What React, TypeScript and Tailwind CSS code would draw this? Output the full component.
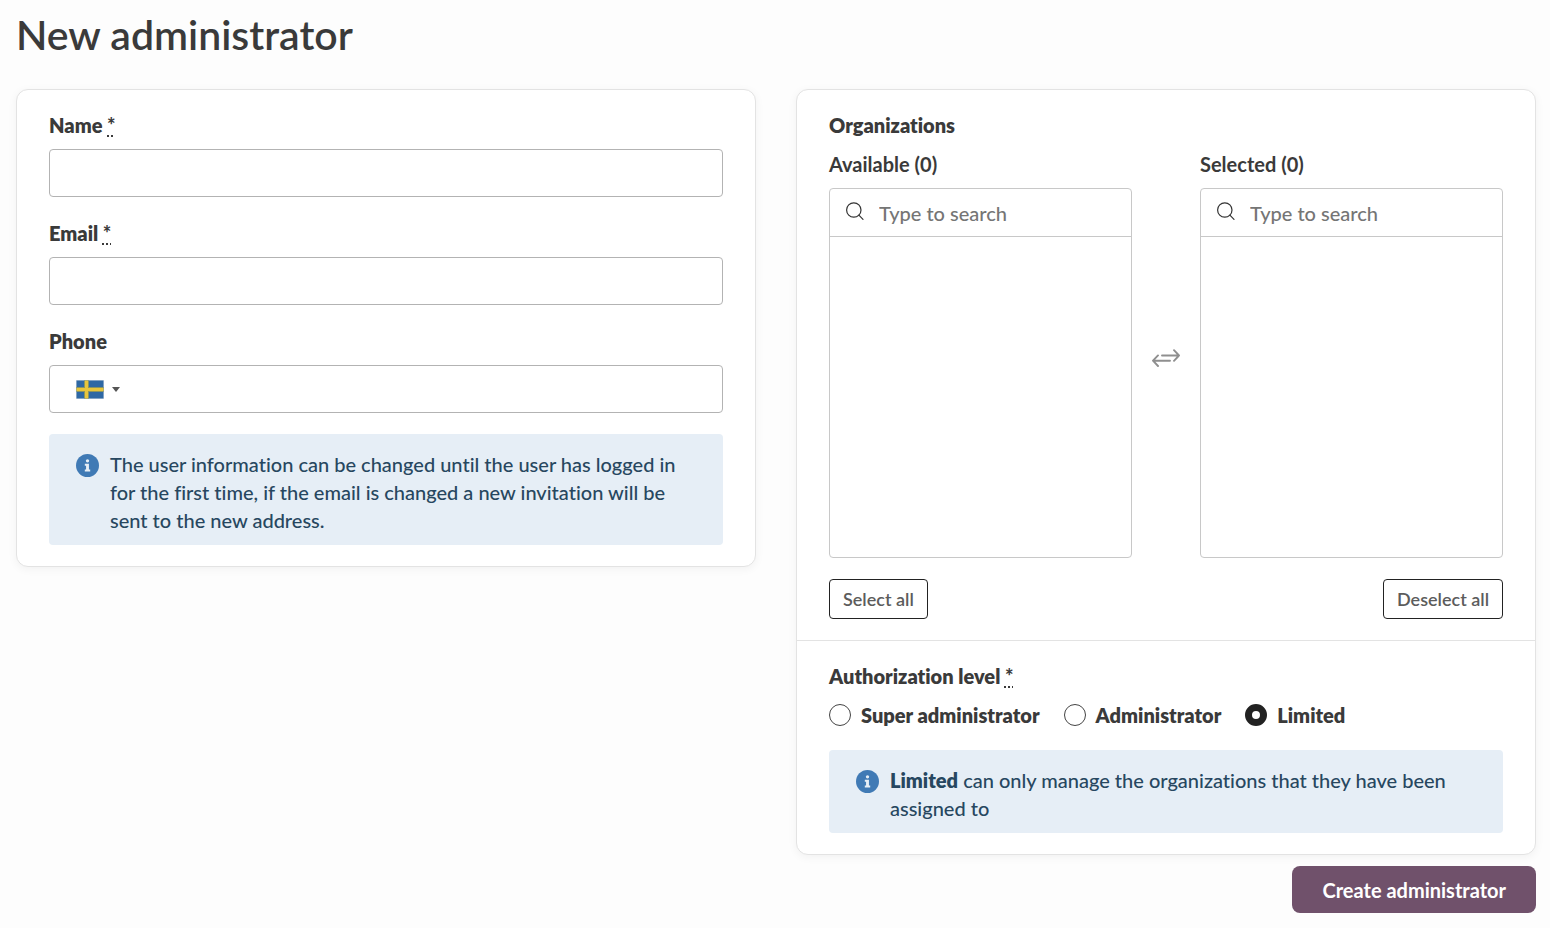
import { useState } from 'react';
import type { ReactNode } from 'react';

type Level = 'super' | 'admin' | 'limited';

const LEVELS: { value: Level; label: string }[] = [
  { value: 'super', label: 'Super administrator' },
  { value: 'admin', label: 'Administrator' },
  { value: 'limited', label: 'Limited' },
];

const LEVEL_INFO: Record<Level, { name: string; text: string }> = {
  super: { name: 'Super administrator', text: 'can manage all organizations and administrators' },
  admin: { name: 'Administrator', text: 'can manage all organizations' },
  limited: { name: 'Limited', text: 'can only manage the organizations that they have been assigned to' },
};

export default function App() {
  const [level, setLevel] = useState<Level>('limited');

  return (
    <div className="min-h-screen bg-[#fdfdfd] pl-4 pr-3.5 pt-3 pb-3.5 font-['Lato','Liberation_Sans',sans-serif] text-[20px] leading-7 text-[#3a3a3a] [font-variant-ligatures:none]">
      <h1 className="mb-8 text-[41px] font-semibold leading-[45px]">New administrator</h1>

      <form onSubmit={(e) => e.preventDefault()}>
        <div className="grid grid-cols-2 items-start gap-10">
          {/* User details */}
          <Card>
            <div className="px-8 py-[21px]">
              <div className="flex flex-col gap-[22px]">
                <Field id="name" label="Name" required>
                  <input id="name" type="text" className="block h-12 w-full rounded border border-[#b3b3b3] bg-white px-4 outline-none focus:border-[#222]" />
                </Field>
                <Field id="email" label="Email" required>
                  <input id="email" type="email" className="block h-12 w-full rounded border border-[#b3b3b3] bg-white px-4 outline-none focus:border-[#222]" />
                </Field>
                <Field id="phone" label="Phone">
                  <div className="flex h-12 items-center rounded border border-[#b3b3b3] bg-white pl-[26px] focus-within:border-[#222]">
                    <button type="button" aria-label="Country: Sweden" className="flex items-center gap-2">
                      <SwedenFlag />
                      <svg width="8" height="5" viewBox="0 0 8 5" fill="#555"><path d="M0 0h8L4 5z" /></svg>
                    </button>
                    <input id="phone" type="tel" className="h-full min-w-0 flex-1 bg-transparent px-3 outline-none" />
                  </div>
                </Field>
              </div>
              <InfoBox>
                The user information can be changed until the user has logged in for the first time, if the email is changed a new invitation will be sent to the new address.
              </InfoBox>
            </div>
          </Card>

          <Card>
            {/* Organizations */}
            <div className="px-8 py-[21px]">
              <h2 className="font-extrabold">Organizations</h2>
              <div className="mt-[11px] flex">
                <ListBox id="available" label="Available (0)" />
                <div className="flex w-[68px] shrink-0 items-center justify-center">
                  <SwapIcon />
                </div>
                <ListBox id="selected" label="Selected (0)" />
              </div>
              <div className="mt-[21px] flex justify-between">
                <OutlineButton>Select all</OutlineButton>
                <OutlineButton>Deselect all</OutlineButton>
              </div>
            </div>

            {/* Authorization */}
            <fieldset className="border-t border-[#e3e3e3] px-8 py-[21px]">
              <legend className="float-left w-full font-extrabold">Authorization level <Required /></legend>
              <div className="clear-both flex flex-wrap gap-x-6 pt-[11px]">
                {LEVELS.map((l) => (
                  <label key={l.value} className="flex items-center gap-2.5 font-extrabold">
                    <input
                      type="radio"
                      name="level"
                      value={l.value}
                      checked={level === l.value}
                      onChange={() => setLevel(l.value)}
                      className="size-[22px] appearance-none rounded-full border border-[#444] bg-white checked:border-[7px] checked:border-[#222]"
                    />
                    {l.label}
                  </label>
                ))}
              </div>
              <InfoBox>
                <strong className="font-extrabold">{LEVEL_INFO[level].name}</strong> {LEVEL_INFO[level].text}
              </InfoBox>
            </fieldset>
          </Card>
        </div>

        <div className="mt-[11px] flex justify-end">
          <button type="submit" className="h-[47px] rounded-lg bg-[#70516b] px-[30px] font-bold text-white hover:bg-[#5f445b]">
            Create administrator
          </button>
        </div>
      </form>
    </div>
  );
}

function Card({ children }: { children: ReactNode }) {
  return (
    <section className="rounded-xl border border-[#e3e3e3] bg-white shadow-[0_2px_10px_rgba(0,0,0,0.05)]">
      {children}
    </section>
  );
}

function Required() {
  return <abbr title="required" className="font-black underline decoration-dotted decoration-2 underline-offset-2">*</abbr>;
}

function Field({ id, label, required, children }: { id: string; label: string; required?: boolean; children: ReactNode }) {
  return (
    <div>
      <label htmlFor={id} className="mb-2.5 block font-extrabold">
        {label} {required && <Required />}
      </label>
      {children}
    </div>
  );
}

function InfoBox({ children }: { children: ReactNode }) {
  return (
    <div className="mt-[21px] flex gap-[11px] rounded bg-[#e6eef6] pl-[27px] pr-8 pt-4 pb-[11px] text-[#274760]">
      <svg className="mt-1 shrink-0" width="23" height="23" viewBox="0 0 512 512">
        <circle cx="256" cy="256" r="256" fill="#407ab5" />
        <circle cx="256" cy="152" r="37" fill="#e6eef6" />
        <path fill="#e6eef6" d="M196 216h92v128h28v48H196v-48h28v-80h-28z" />
      </svg>
      <p className="font-medium">{children}</p>
    </div>
  );
}

function ListBox({ id, label }: { id: string; label: string }) {
  return (
    <div className="min-w-0 flex-1">
      <label htmlFor={id} className="mb-2.5 block font-bold">{label}</label>
      <div className="rounded border border-[#c8c8c8] bg-white">
        <div className="flex h-12 items-center border-b border-[#c8c8c8] pl-4">
          <SearchIcon />
          <input id={id} type="search" placeholder="Type to search" className="h-full min-w-0 flex-1 bg-transparent pl-[15px] font-medium outline-none placeholder:text-[#757575]" />
        </div>
        <ul className="h-80" />
      </div>
    </div>
  );
}

function OutlineButton({ children }: { children: ReactNode }) {
  return (
    <button type="button" className="h-10 rounded border border-[#222] bg-white px-[13px] text-[18px] font-semibold text-[#5c5c5c] hover:bg-gray-50">
      {children}
    </button>
  );
}

function SearchIcon() {
  return (
    <svg className="mb-1 shrink-0" width="18" height="18" viewBox="0 0 18 18" fill="none" stroke="#333" strokeWidth="1.2" strokeLinecap="round">
      <circle cx="7.8" cy="8" r="7.2" />
      <path d="M12.9 13.2l4.1 4.1" />
    </svg>
  );
}

function SwapIcon() {
  return (
    <svg className="mt-2" width="28" height="18" viewBox="0 0 28 18" fill="none" stroke="#8f8f8f" strokeWidth="1.9" strokeLinecap="round" strokeLinejoin="round">
      <path d="M10 6.5h17M22 1.2l5 5.3-5 5.3" />
      <path d="M18 11.7H1M6 6.4l-5 5.3 5 5.3" />
    </svg>
  );
}

function SwedenFlag() {
  return (
    <svg width="28" height="19" viewBox="0 0 28 19">
      <rect width="28" height="19" fill="#d8dee6" />
      <rect x="0.5" y="0.5" width="27" height="18" fill="#2f68a4" />
      <path d="M10.5 0.5v18M0.5 9.5h27" stroke="#8b9560" strokeWidth="5" />
      <path d="M10.5 0.5v18M0.5 9.5h27" stroke="#e8c53c" strokeWidth="3" />
    </svg>
  );
}
